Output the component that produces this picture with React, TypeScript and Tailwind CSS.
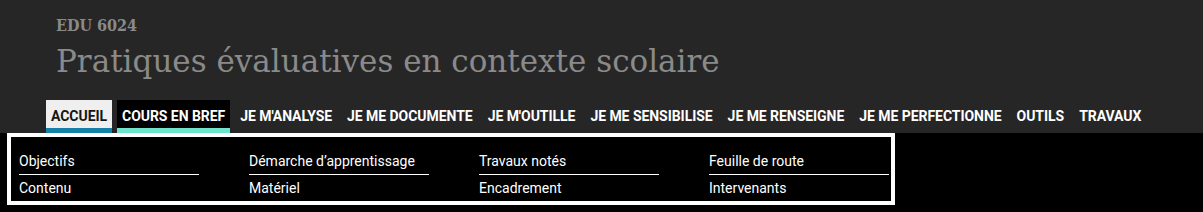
const tabs = [
  "Accueil",
  "Cours en bref",
  "Je m'analyse",
  "Je me documente",
  "Je m'outille",
  "Je me sensibilise",
  "Je me renseigne",
  "Je me perfectionne",
  "Outils",
  "Travaux",
];

const columns = [
  ["Objectifs", "Contenu"],
  ["Démarche d’apprentissage", "Matériel"],
  ["Travaux notés", "Encadrement"],
  ["Feuille de route", "Intervenants"],
];

export default function App() {
  return (
    <div className="w-[1203px] h-[212px] bg-black font-['Roboto',sans-serif]">
      {/* header */}
      <header className="h-[133px] bg-[#262626] pt-[14px]">
        <div className="pl-[56px] text-[#8a8a8a] font-['DejaVu_Serif',serif]">
          <div className="text-[16px] leading-[24px] font-bold font-stretch-condensed">EDU 6024</div>
          <h1 className="mt-[3px] text-[31px] leading-[40px] font-normal">
            Pratiques évaluatives en contexte scolaire
          </h1>
        </div>
        <nav className="mt-[19px] pl-[46px] flex gap-[5px]">
          {tabs.map((t, i) => (
            <a
              key={t}
              className={
                i === 0
                  ? "h-[33px] px-[5px] pt-[6px] border-b-[5px] border-[#1581a6] bg-[#efefef] text-[#151515] text-[14px] leading-[20px] font-bold uppercase tracking-[-0.05px]"
                  : i === 1
                  ? "h-[33px] px-[5px] pt-[6px] border-b-[5px] border-[#6ee4cc] bg-black text-white text-[14px] leading-[20px] font-bold uppercase tracking-[-0.05px]"
                  : "h-[33px] px-[5px] pt-[6px] border-b-[5px] border-transparent text-white text-[14px] leading-[20px] font-bold uppercase tracking-[-0.05px]"
              }
            >
              {t}
            </a>
          ))}
        </nav>
      </header>

      {/* sub menu */}
      <div className="ml-[7px] w-[888px] h-[72px] border-4 border-white pl-[8px] pt-[14px] flex gap-[50px] text-white text-[14px] leading-[20px]">
        {columns.map((col) => (
          <div key={col[0]} className="w-[180px]">
            <div className="pb-[3px] border-b border-white">{col[0]}</div>
            <div className="pt-[3px]">{col[1]}</div>
          </div>
        ))}
      </div>
    </div>
  );
}
